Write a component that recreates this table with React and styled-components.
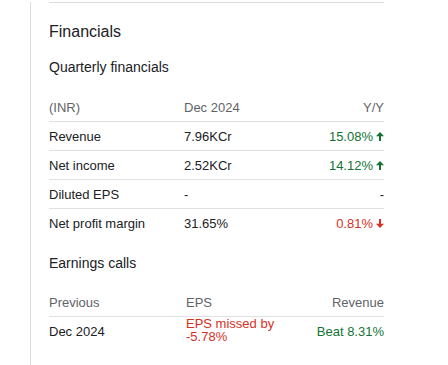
import React from "react";
import styled, { createGlobalStyle } from "styled-components";

const Global = createGlobalStyle`
  html, body { margin: 0; padding: 0; background: #fff; }
  body { font-family: "Liberation Sans", Arial, sans-serif; color: #202124; }
`;

const Page = styled.div`
  height: 365px;
  padding-left: 30px;
  overflow: hidden;
`;

const Panel = styled.div`
  height: 100%;
  border-left: 1px solid #dadce0;
  padding-left: 18px;
  width: 335px;
`;

const Rule = styled.div`
  margin-top: 2px;
  height: 1px;
  background: #dadce0;
`;

const Title = styled.h2`
  margin: 17px 0 0;
  font-size: 16px;
  line-height: 24px;
  font-weight: 400;
  color: #202124;
`;

const Subtitle = styled.h3`
  margin: ${(p) => p.$mt}px 0 0;
  font-size: 14px;
  line-height: 20px;
  font-weight: 400;
  color: #202124;
`;

const Table = styled.div`
  margin-top: ${(p) => p.$mt}px;
`;

const Row = styled.div`
  display: grid;
  grid-template-columns: ${(p) => p.$cols};
  align-items: center;
  height: 28px;
  border-bottom: ${(p) => (p.$last ? "none" : "1px solid #e0e0e0")};
  font-size: 13px;
  line-height: 15px;
  color: ${(p) => (p.$head ? "#5f6368" : "#202124")};
`;

const Cell = styled.div`
  text-align: ${(p) => (p.$right ? "right" : "left")};
  color: ${(p) =>
    p.$tone === "up" ? "#137333" : p.$tone === "down" ? "#d93025" : "inherit"};
  line-height: ${(p) => (p.$tight ? "12.7px" : "15px")};
  display: ${(p) => (p.$right ? "flex" : "block")};
  justify-content: flex-end;
  align-items: center;
  gap: 3px;
`;

const Arrow = ({ down, color }) => (
  <svg width="8" height="9" viewBox="0 0 8 9" style={{ display: "block" }}>
    <g fill={color} transform={down ? "rotate(180 4 4.5)" : undefined}>
      <path d="M4 0 L8 4.3 H0 Z" />
      <rect x="3" y="4" width="2" height="5" />
    </g>
  </svg>
);

const Change = ({ value, dir }) => (
  <Cell $right $tone={dir}>
    <span>{value}</span>
    {dir && <Arrow down={dir === "down"} color={dir === "up" ? "#137333" : "#d93025"} />}
  </Cell>
);

const qRows = [
  ["Revenue", "7.96KCr", "15.08%", "up"],
  ["Net income", "2.52KCr", "14.12%", "up"],
  ["Diluted EPS", "-", "-", null],
  ["Net profit margin", "31.65%", "0.81%", "down"],
];

export default function App() {
  const qCols = "135px 1fr 100px";
  const eCols = "137px 100px 1fr";
  return (
    <>
      <Global />
      <Page>
        <Panel>
          <Rule />
          <Title>Financials</Title>
          <Subtitle $mt={13}>Quarterly financials</Subtitle>
          <Table $mt={16}>
            <Row $head $cols={qCols}>
              <Cell>(INR)</Cell>
              <Cell>Dec 2024</Cell>
              <Cell $right>Y/Y</Cell>
            </Row>
            {qRows.map((r, i) => (
              <Row key={r[0]} $cols={qCols} $last={i === qRows.length - 1}>
                <Cell>{r[0]}</Cell>
                <Cell>{r[1]}</Cell>
                <Change value={r[2]} dir={r[3]} />
              </Row>
            ))}
          </Table>
          <Subtitle $mt={16}>Earnings calls</Subtitle>
          <Table $mt={15}>
            <Row $head $cols={eCols}>
              <Cell>Previous</Cell>
              <Cell>EPS</Cell>
              <Cell $right>Revenue</Cell>
            </Row>
            <Row $cols={eCols} $last>
              <Cell>Dec 2024</Cell>
              <Cell $tone="down" $tight>EPS missed by -5.78%</Cell>
              <Cell $right $tone="up">Beat 8.31%</Cell>
            </Row>
          </Table>
        </Panel>
      </Page>
    </>
  );
}
